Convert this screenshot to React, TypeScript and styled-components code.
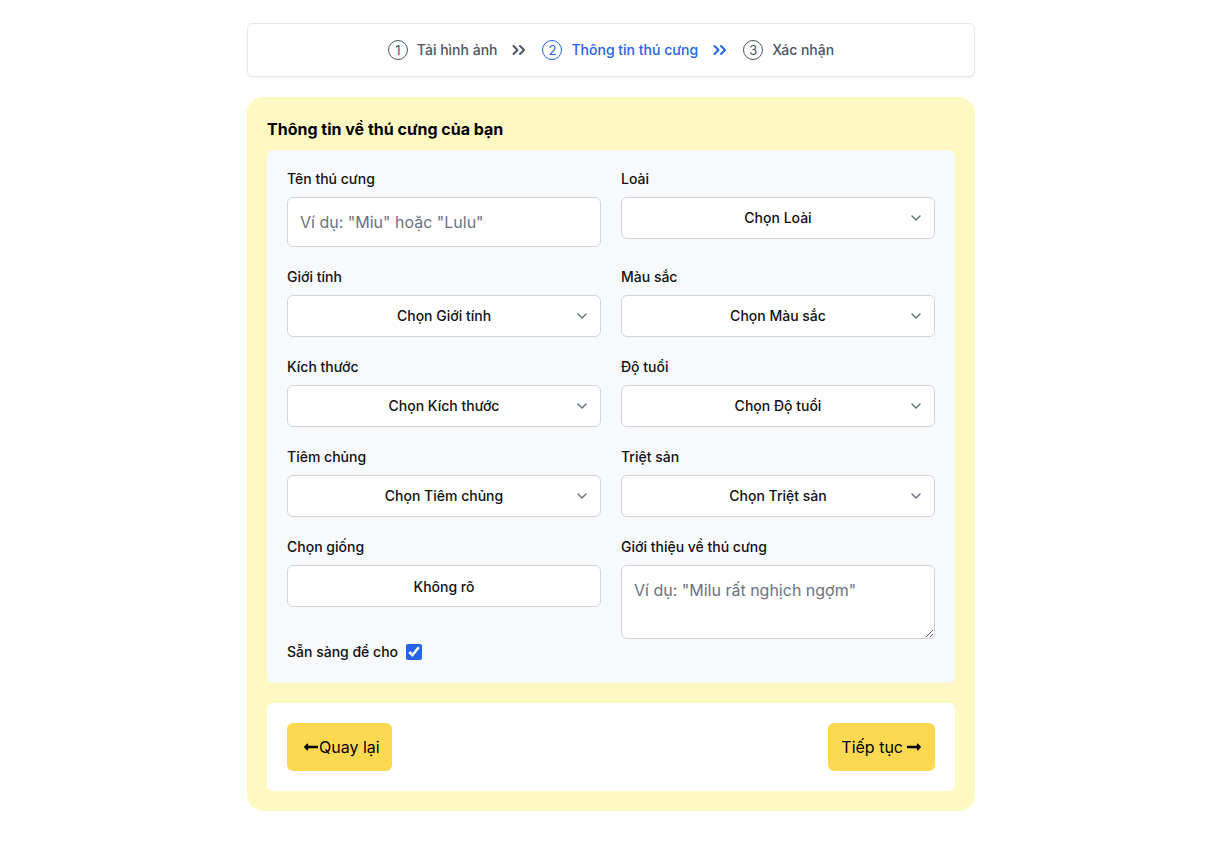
import React from "react";
import styled, { createGlobalStyle } from "styled-components";
import { FaLongArrowAltLeft, FaLongArrowAltRight } from "react-icons/fa";

const Global = createGlobalStyle`
  html, body { margin: 0; padding: 0; background: #ffffff; }
  body { font-family: Inter, "Noto Sans", sans-serif; color: #111827; }
  * { box-sizing: border-box; }
`;

const Page = styled.div`
  width: 728px;
  margin: 0 auto;
  padding: 23px 0 36px;
  display: flex;
  flex-direction: column;
  gap: 20px;
`;

const Stepper = styled.nav`
  display: flex;
  align-items: center;
  justify-content: center;
  padding: 16px;
  border: 1px solid #e5e7eb;
  border-radius: 6px;
  box-shadow: 0 1px 2px rgba(0, 0, 0, 0.05);
  background: #fff;
`;

const Step = styled.div<{ $active?: boolean }>`
  display: flex;
  align-items: center;
  gap: 9px;
  font-size: 14px;
  line-height: 20px;
  font-weight: 500;
  color: ${(p) => (p.$active ? "#2563eb" : "#4b5563")};
`;

const Circle = styled.span<{ $active?: boolean }>`
  width: 20px;
  height: 20px;
  border-radius: 50%;
  border: 1.5px solid ${(p) => (p.$active ? "#2563eb" : "#4b5563")};
  display: flex;
  align-items: center;
  justify-content: center;
  font-size: 13px;
  font-weight: 400;
`;

const Sep = styled.span<{ $active?: boolean }>`
  display: flex;
  margin: 0 16px 0 15px;
  color: ${(p) => (p.$active ? "#2563eb" : "#4b5563")};
`;

const Card = styled.section`
  background: #fef8c2;
  border-radius: 16px;
  padding: 20px;
  display: flex;
  flex-direction: column;
`;

const Title = styled.h2`
  margin: 0 0 9px;
  font-size: 16px;
  line-height: 24px;
  font-weight: 700;
  color: #000;
`;

const FormPanel = styled.div`
  background: #f8f9fb;
  border-radius: 6px;
  padding: 19px 20px 21px;
  display: grid;
  grid-template-columns: 1fr 1fr;
  column-gap: 20px;
  row-gap: 20px;
`;

const Field = styled.div`
  display: flex;
  flex-direction: column;
`;

const Label = styled.label`
  font-size: 14px;
  line-height: 20px;
  font-weight: 500;
  color: #111;
  margin-bottom: 8px;
`;

const TextInput = styled.input`
  height: 50px;
  padding: 12px;
  font-family: inherit;
  font-size: 16px;
  line-height: 24px;
  border: 1px solid #d1d5db;
  border-radius: 6px;
  background: #fff;
  color: #111827;
  outline: none;
  &::placeholder { color: #6b7280; }
`;

const SelectWrap = styled.div`
  position: relative;
`;

const Select = styled.select`
  width: 100%;
  height: 42px;
  padding: 10px 12px;
  appearance: none;
  -webkit-appearance: none;
  font-family: inherit;
  font-size: 14px;
  line-height: 20px;
  font-weight: 500;
  text-align: center;
  text-align-last: center;
  color: #111;
  border: 1px solid #d1d5db;
  border-radius: 6px;
  background: #fff;
  outline: none;
`;

const Chevron = styled.svg`
  position: absolute;
  right: 9px;
  top: 50%;
  transform: translateY(-50%);
  pointer-events: none;
`;

const BreedButton = styled.button`
  height: 42px;
  font-family: inherit;
  font-size: 14px;
  font-weight: 500;
  color: #111;
  border: 1px solid #d1d5db;
  border-radius: 6px;
  background: #fff;
`;

const TextArea = styled.textarea`
  height: 74px;
  padding: 12px;
  font-family: inherit;
  font-size: 16px;
  line-height: 24px;
  border: 1px solid #d1d5db;
  border-radius: 6px;
  background: #fff;
  resize: vertical;
  outline: none;
  &::placeholder { color: #6b7280; }
`;

const CheckRow = styled.div`
  display: flex;
  align-items: center;
  gap: 8px;
  margin-top: 35px;
  font-size: 14px;
  line-height: 20px;
  font-weight: 500;
  color: #111;
`;

const Check = styled.input`
  width: 16px;
  height: 16px;
  margin: 0;
  accent-color: #2563eb;
`;

const ActionPanel = styled.div`
  margin-top: 20px;
  background: #fff;
  border-radius: 6px;
  padding: 20px;
  display: flex;
  justify-content: space-between;
  align-items: center;
`;

const ActionButton = styled.button<{ $next?: boolean }>`
  height: 48px;
  padding: ${(p) => (p.$next ? "12px 13px 12px 13px" : "12px 12px 12px 16px")};
  display: flex;
  align-items: center;
  gap: ${(p) => (p.$next ? "3px" : "0")};
  font-family: inherit;
  font-size: 16px;
  line-height: 24px;
  color: #000;
  background: #fdd952;
  border: none;
  border-radius: 6px;
`;

const ChevronDown = () => (
  <Chevron width="20" height="20" viewBox="0 0 20 20" fill="none">
    <path d="M6 8l4 4 4-4" stroke="#6b7280" strokeWidth="1.5" strokeLinecap="round" strokeLinejoin="round" />
  </Chevron>
);

const DoubleChevron = () => (
  <svg width="14" height="14" viewBox="0 0 14 14" fill="none" stroke="currentColor" strokeWidth="2" strokeLinecap="round" strokeLinejoin="round">
    <path d="M1.5 3l4 4-4 4" />
    <path d="M8 3l4 4-4 4" />
  </svg>
);

const SelectField = ({ label, text }: { label: string; text: string }) => (
  <Field>
    <Label>{label}</Label>
    <SelectWrap>
      <Select defaultValue="">
        <option value="">{text}</option>
      </Select>
      <ChevronDown />
    </SelectWrap>
  </Field>
);

export default function App() {
  return (
    <>
      <Global />
      <Page>
        <Stepper>
          <Step>
            <Circle>1</Circle>Tải hình ảnh
          </Step>
          <Sep><DoubleChevron /></Sep>
          <Step $active>
            <Circle $active>2</Circle>Thông tin thú cưng
          </Step>
          <Sep $active><DoubleChevron /></Sep>
          <Step>
            <Circle>3</Circle>Xác nhận
          </Step>
        </Stepper>

        <Card>
          <Title>Thông tin về thú cưng của bạn</Title>
          <FormPanel>
            <Field>
              <Label>Tên thú cưng</Label>
              <TextInput placeholder={'Ví dụ: "Miu" hoặc "Lulu"'} />
            </Field>
            <SelectField label="Loài" text="Chọn Loài" />
            <SelectField label="Giới tính" text="Chọn Giới tính" />
            <SelectField label="Màu sắc" text="Chọn Màu sắc" />
            <SelectField label="Kích thước" text="Chọn Kích thước" />
            <SelectField label="Độ tuổi" text="Chọn Độ tuổi" />
            <SelectField label="Tiêm chủng" text="Chọn Tiêm chủng" />
            <SelectField label="Triệt sản" text="Chọn Triệt sản" />
            <Field>
              <Label>Chọn giống</Label>
              <BreedButton type="button">Không rõ</BreedButton>
              <CheckRow>
                Sẵn sàng để cho
                <Check type="checkbox" defaultChecked />
              </CheckRow>
            </Field>
            <Field>
              <Label>Giới thiệu về thú cưng</Label>
              <TextArea placeholder={'Ví dụ: "Milu rất nghịch ngợm"'} />
            </Field>
          </FormPanel>
          <ActionPanel>
            <ActionButton type="button">
              <FaLongArrowAltLeft size={16} />Quay lại
            </ActionButton>
            <ActionButton type="button" $next>
              Tiếp tục<FaLongArrowAltRight size={16} />
            </ActionButton>
          </ActionPanel>
        </Card>
      </Page>
    </>
  );
}
